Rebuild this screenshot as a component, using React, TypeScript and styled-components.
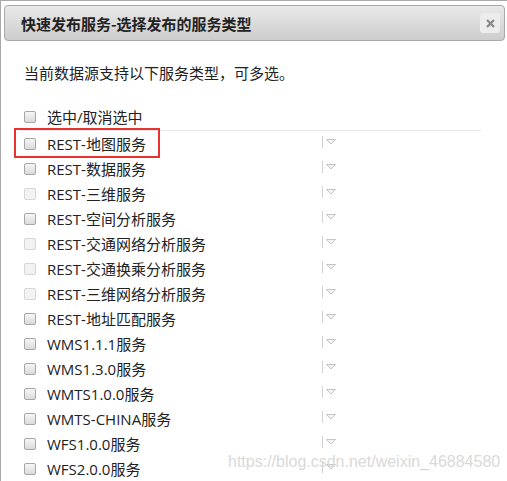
import React from 'react'
import styled, { createGlobalStyle } from 'styled-components'

const GlobalStyle = createGlobalStyle`
  html, body {
    margin: 0;
    padding: 0;
    background: #fff;
    overflow: hidden;
  }
  body {
    font-family: "Open Sans", "Noto Sans CJK SC", sans-serif;
    color: #222;
  }
`

const Dialog = styled.div`
  position: relative;
  width: 507px;
  height: 481px;
  box-sizing: border-box;
  border-top: 1px solid #a8a8a8;
  border-left: 1px solid #a8a8a8;
  padding: 4px 2px 0 3px;
  overflow: hidden;
`

const Header = styled.div`
  height: 36px;
  box-sizing: border-box;
  border: 1px solid #aaa;
  border-radius: 4px;
  background: linear-gradient(#e9e9e9, #cdcdcd);
  display: flex;
  align-items: center;
  justify-content: space-between;
  padding: 0 4px 0 16px;
`

const Title = styled.span`
  font-family: "Noto Sans CJK SC", sans-serif;
  font-weight: bold;
  font-size: 15px;
  color: #222;
`

const Close = styled.button`
  width: 20px;
  height: 20px;
  border: none;
  border-radius: 3px;
  background: #ececec;
  display: flex;
  align-items: center;
  justify-content: center;
  padding: 0;
`

const Body = styled.div`
  padding: 22px 0 0 16px;
`

const Intro = styled.p`
  margin: 0 0 21px 4px;
  font-size: 15px;
  line-height: 20px;
`

const List = styled.div`
  width: 461px;
`

const Row = styled.div<{ $head?: boolean }>`
  display: grid;
  grid-template-columns: 12px 274px auto;
  column-gap: 11px;
  align-items: center;
  height: ${p => (p.$head ? '26px' : '25px')};
  padding-left: 4px;
  border-bottom: ${p => (p.$head ? '1px solid #e8e8e8' : 'none')};
  font-size: 15px;
`

const Box = styled.span<{ $off?: boolean }>`
  width: 12px;
  height: 12px;
  box-sizing: border-box;
  border-radius: 2px;
  border: 1px solid ${p => (p.$off ? '#d6d6d6' : '#a6a6a6')};
  background: ${p => (p.$off ? '#f2f2f2' : 'linear-gradient(#f6f6f6, #dadada)')};
`

const Label = styled.span`
  white-space: nowrap;
  line-height: 20px;
`

const Drop = styled.span`
  display: flex;
  align-items: center;
  gap: 3px;
  margin-left: -10px;
  height: 12px;
  margin-top: -4px;
  &::before {
    content: '';
    width: 1px;
    height: 12px;
    background: #d0d0d0;
  }
`

const Mark = styled.div`
  position: absolute;
  left: 13px;
  top: 127px;
  width: 146px;
  height: 30px;
  box-sizing: border-box;
  border: 2px solid #e8322f;
`

const Watermark = styled.div`
  position: absolute;
  left: 227px;
  top: 452px;
  font-family: "Liberation Sans", Arial, sans-serif;
  font-size: 16px;
  color: #d9d9d9;
  white-space: nowrap;
`

const items: { label: string; off?: boolean }[] = [
  { label: 'REST-地图服务' },
  { label: 'REST-数据服务' },
  { label: 'REST-三维服务', off: true },
  { label: 'REST-空间分析服务' },
  { label: 'REST-交通网络分析服务', off: true },
  { label: 'REST-交通换乘分析服务', off: true },
  { label: 'REST-三维网络分析服务', off: true },
  { label: 'REST-地址匹配服务' },
  { label: 'WMS1.1.1服务' },
  { label: 'WMS1.3.0服务' },
  { label: 'WMTS1.0.0服务' },
  { label: 'WMTS-CHINA服务' },
  { label: 'WFS1.0.0服务' },
  { label: 'WFS2.0.0服务' },
]

const Arrow = () => (
  <svg width="10" height="6" viewBox="0 0 10 6">
    <path d="M0.5 0.5 H9.5 L5 5 Z" fill="#f4f4f4" stroke="#c4c4c4" strokeWidth="1" />
  </svg>
)

const App = () => {
  return (
    <>
      <GlobalStyle />
      <Dialog>
        <Header>
          <Title>快速发布服务-选择发布的服务类型</Title>
          <Close>
            <svg width="9" height="9" viewBox="0 0 9 9">
              <path d="M1 1 L8 8 M8 1 L1 8" stroke="#8a8a8a" strokeWidth="2.4" />
            </svg>
          </Close>
        </Header>
        <Body>
          <Intro>当前数据源支持以下服务类型，可多选。</Intro>
          <List>
            <Row $head>
              <Box />
              <Label>选中/取消选中</Label>
            </Row>
            {items.map(it => (
              <Row key={it.label}>
                <Box $off={it.off} />
                <Label>{it.label}</Label>
                <Drop>
                  <Arrow />
                </Drop>
              </Row>
            ))}
          </List>
        </Body>
        <Mark />
        <Watermark>https://blog.csdn.net/weixin_46884580</Watermark>
      </Dialog>
    </>
  )
}

export default App
